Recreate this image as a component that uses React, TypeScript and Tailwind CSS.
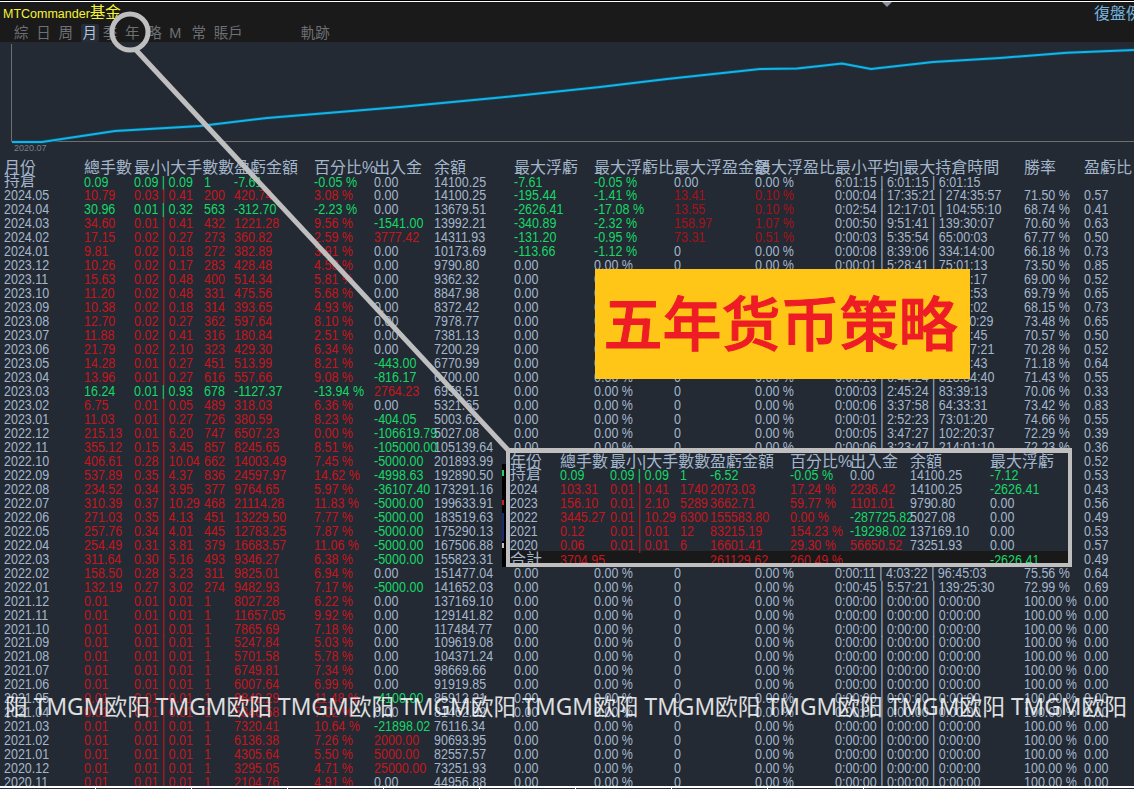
const SANS = "font-['Liberation_Sans','Noto_Sans_CJK_TC',sans-serif]";

const COLS = "grid-cols-[80px_50px_70px_30px_80px_60px_60px_80px_80px_80px_81px_80px_189px_60px_50px]";
const MINI_COLS = "grid-cols-[50px_50px_70px_30px_80px_60px_60px_80px_70px]";

const HEADERS = ["月份", "總手數", "最小|大手數數", "", "盈虧金額", "百分比%", "出入金", "余額", "最大浮虧", "最大浮虧比", "最大浮盈金額", "最大浮盈比", "最小平均|最大持倉時間", "勝率", "盈虧比"];
const YEAR_HEADERS = ["年份", "總手數", "最小|大手數數", "", "盈虧金額", "百分比%", "出入金", "余額", "最大浮虧"];

const ZERO = "0:00:00 | 0:00:00 | 0:00:00";

// month, lots, min|max, trades, profit, percent, cash flow, balance
const LEFT: string[][] = [
  ["持倉", "0.09", "0.09 | 0.09", "1", "-7.61", "-0.05 %", "0.00", "14100.25"],
  ["2024.05", "10.79", "0.03 | 0.41", "200", "420.74", "3.08 %", "0.00", "14100.25"],
  ["2024.04", "30.96", "0.01 | 0.32", "563", "-312.70", "-2.23 %", "0.00", "13679.51"],
  ["2024.03", "34.60", "0.01 | 0.41", "432", "1221.28", "9.56 %", "-1541.00", "13992.21"],
  ["2024.02", "17.15", "0.02 | 0.27", "273", "360.82", "2.59 %", "3777.42", "14311.93"],
  ["2024.01", "9.81", "0.02 | 0.18", "272", "382.89", "3.91 %", "0.00", "10173.69"],
  ["2023.12", "10.26", "0.02 | 0.17", "283", "428.48", "4.58 %", "0.00", "9790.80"],
  ["2023.11", "15.63", "0.02 | 0.48", "400", "514.34", "5.81 %", "0.00", "9362.32"],
  ["2023.10", "11.20", "0.02 | 0.48", "331", "475.56", "5.68 %", "0.00", "8847.98"],
  ["2023.09", "10.38", "0.02 | 0.18", "314", "393.65", "4.93 %", "0.00", "8372.42"],
  ["2023.08", "12.70", "0.02 | 0.27", "362", "597.64", "8.10 %", "0.00", "7978.77"],
  ["2023.07", "11.88", "0.02 | 0.41", "316", "180.84", "2.51 %", "0.00", "7381.13"],
  ["2023.06", "21.79", "0.02 | 2.10", "323", "429.30", "6.34 %", "0.00", "7200.29"],
  ["2023.05", "14.28", "0.01 | 0.27", "451", "513.99", "8.21 %", "-443.00", "6770.99"],
  ["2023.04", "13.96", "0.01 | 0.27", "616", "557.66", "9.08 %", "-816.17", "6700.00"],
  ["2023.03", "16.24", "0.01 | 0.93", "678", "-1127.37", "-13.94 %", "2764.23", "6958.51"],
  ["2023.02", "6.75", "0.01 | 0.05", "489", "318.03", "6.36 %", "0.00", "5321.65"],
  ["2023.01", "11.03", "0.01 | 0.27", "726", "380.59", "8.23 %", "-404.05", "5003.62"],
  ["2022.12", "215.13", "0.01 | 6.20", "747", "6507.23", "0.00 %", "-106619.79", "5027.08"],
  ["2022.11", "355.12", "0.15 | 3.45", "857", "8245.65", "8.51 %", "-105000.00", "105139.64"],
  ["2022.10", "406.61", "0.28 | 10.04", "662", "14003.49", "7.45 %", "-5000.00", "201893.99"],
  ["2022.09", "537.89", "0.35 | 4.37", "836", "24597.97", "14.62 %", "-4998.63", "192890.50"],
  ["2022.08", "234.52", "0.34 | 3.95", "377", "9764.65", "5.97 %", "-36107.40", "173291.16"],
  ["2022.07", "310.39", "0.37 | 10.29", "468", "21114.28", "11.83 %", "-5000.00", "199633.91"],
  ["2022.06", "271.03", "0.35 | 4.13", "451", "13229.50", "7.77 %", "-5000.00", "183519.63"],
  ["2022.05", "257.76", "0.34 | 4.01", "445", "12783.25", "7.87 %", "-5000.00", "175290.13"],
  ["2022.04", "254.49", "0.31 | 3.81", "379", "16683.57", "11.06 %", "-5000.00", "167506.88"],
  ["2022.03", "311.64", "0.30 | 5.16", "493", "9346.27", "6.38 %", "-5000.00", "155823.31"],
  ["2022.02", "158.50", "0.28 | 3.23", "311", "9825.01", "6.94 %", "0.00", "151477.04"],
  ["2022.01", "132.19", "0.27 | 3.02", "274", "9482.93", "7.17 %", "-5000.00", "141652.03"],
  ["2021.12", "0.01", "0.01 | 0.01", "1", "8027.28", "6.22 %", "0.00", "137169.10"],
  ["2021.11", "0.01", "0.01 | 0.01", "1", "11657.05", "9.92 %", "0.00", "129141.82"],
  ["2021.10", "0.01", "0.01 | 0.01", "1", "7865.69", "7.18 %", "0.00", "117484.77"],
  ["2021.09", "0.01", "0.01 | 0.01", "1", "5247.84", "5.03 %", "0.00", "109619.08"],
  ["2021.08", "0.01", "0.01 | 0.01", "1", "5701.58", "5.78 %", "0.00", "104371.24"],
  ["2021.07", "0.01", "0.01 | 0.01", "1", "6749.81", "7.34 %", "0.00", "98669.66"],
  ["2021.06", "0.01", "0.01 | 0.01", "1", "6007.64", "6.99 %", "0.00", "91919.85"],
  ["2021.05", "0.01", "0.01 | 0.01", "1", "8849.29", "11.48 %", "-4100.00", "85912.21"],
  ["2021.04", "0.01", "0.01 | 0.01", "1", "5346.58", "7.02 %", "0.00", "81462.92"],
  ["2021.03", "0.01", "0.01 | 0.01", "1", "7320.41", "10.64 %", "-21898.02", "76116.34"],
  ["2021.02", "0.01", "0.01 | 0.01", "1", "6136.38", "7.26 %", "2000.00", "90693.95"],
  ["2021.01", "0.01", "0.01 | 0.01", "1", "4305.64", "5.50 %", "5000.00", "82557.57"],
  ["2020.12", "0.01", "0.01 | 0.01", "1", "3295.05", "4.71 %", "25000.00", "73251.93"],
  ["2020.11", "0.01", "0.01 | 0.01", "1", "2104.76", "4.91 %", "0.00", "44956.88"],
];

// hold times, win rate, profit factor
const RIGHT: string[][] = [
  ["6:01:15 | 6:01:15 | 6:01:15", "", ""],
  ["0:00:04 | 17:35:21 | 274:35:57", "71.50 %", "0.57"],
  ["0:02:54 | 12:17:01 | 104:55:10", "68.74 %", "0.41"],
  ["0:00:50 | 9:51:41 | 139:30:07", "70.60 %", "0.63"],
  ["0:00:03 | 5:35:54 | 65:00:03", "67.77 %", "0.50"],
  ["0:00:08 | 8:39:06 | 334:14:00", "66.18 %", "0.73"],
  ["0:00:01 | 5:28:41 | 75:01:13", "73.50 %", "0.85"],
  ["0:00:02 | 6:12:08 | 88:47:17", "69.00 %", "0.52"],
  ["0:00:04 | 5:40:33 | 96:13:53", "69.79 %", "0.65"],
  ["0:00:01 | 4:58:19 | 72:33:02", "68.15 %", "0.73"],
  ["0:00:03 | 4:21:46 | 110:50:29", "73.48 %", "0.65"],
  ["0:00:05 | 5:02:37 | 84:59:45", "70.57 %", "0.50"],
  ["0:00:02 | 3:55:10 | 139:07:21", "70.28 %", "0.52"],
  ["0:00:06 | 4:17:52 | 91:28:43", "71.18 %", "0.64"],
  ["0:00:10 | 6:44:24 | 313:54:40", "71.43 %", "0.55"],
  ["0:00:03 | 2:45:24 | 83:39:13", "70.06 %", "0.33"],
  ["0:00:06 | 3:37:58 | 64:33:31", "73.42 %", "0.83"],
  ["0:00:01 | 2:52:23 | 73:01:20", "74.66 %", "0.55"],
  ["0:00:05 | 3:47:27 | 102:20:37", "72.29 %", "0.39"],
  ["0:00:06 | 3:23:47 | 214:01:10", "72.23 %", "0.36"],
  ["0:00:04 | 3:12:09 | 98:14:22", "71.02 %", "0.52"],
  ["0:00:02 | 3:30:41 | 120:05:36", "72.50 %", "0.53"],
  ["0:00:07 | 3:05:18 | 87:42:11", "70.88 %", "0.43"],
  ["0:00:03 | 3:41:55 | 105:19:48", "73.12 %", "0.56"],
  ["0:00:05 | 3:18:27 | 92:36:04", "71.67 %", "0.49"],
  ["0:00:01 | 3:27:33 | 116:51:20", "72.04 %", "0.53"],
  ["0:00:08 | 3:52:16 | 101:08:39", "74.21 %", "0.57"],
  ["0:00:04 | 3:36:02 | 94:27:15", "73.36 %", "0.49"],
  ["0:00:11 | 4:03:22 | 96:45:03", "75.56 %", "0.64"],
  ["0:00:45 | 5:57:21 | 139:25:30", "72.99 %", "0.69"],
];

const FLOATS: string[][] = [
  ["-7.61", "-0.05 %", "0.00", "0.00 %"],
  ["-195.44", "-1.41 %", "13.41", "0.10 %"],
  ["-2626.41", "-17.08 %", "13.55", "0.10 %"],
  ["-340.89", "-2.32 %", "158.97", "1.07 %"],
  ["-131.20", "-0.95 %", "73.31", "0.51 %"],
  ["-113.66", "-1.12 %", "0", "0.00 %"],
];

const YEARS: string[][] = [
  ["持倉", "0.09", "0.09 | 0.09", "1", "-6.52", "-0.05 %", "0.00", "14100.25", "-7.12"],
  ["2024", "103.31", "0.01 | 0.41", "1740", "2073.03", "17.24 %", "2236.42", "14100.25", "-2626.41"],
  ["2023", "156.10", "0.01 | 2.10", "5289", "3662.71", "59.77 %", "1101.01", "9790.80", "0.00"],
  ["2022", "3445.27", "0.01 | 10.29", "6300", "155583.80", "0.00 %", "-287725.82", "5027.08", "0.00"],
  ["2021", "0.12", "0.01 | 0.01", "12", "83215.19", "154.23 %", "-19298.02", "137169.10", "0.00"],
  ["2020", "0.06", "0.01 | 0.01", "6", "16601.41", "29.30 %", "56650.52", "73251.93", "0.00"],
];

const NAV = [
  { label: "綜", w: "w-[22.2px]" },
  { label: "日", w: "w-[22.2px]" },
  { label: "周", w: "w-[22.2px]" },
  { label: "月", w: "w-[22.2px]", active: true },
  { label: "季", w: "w-[22.2px]" },
  { label: "年", w: "w-[22.2px]" },
  { label: "略", w: "w-[22.2px]" },
  { label: "M", w: "w-[22.2px]" },
  { label: "常", w: "w-[22.2px]" },
  { label: "賬戶", w: "w-[87px]" },
  { label: "軌跡", w: "w-[40px]" },
];

const TICKS = [0, 1, 2, 3, 4, 5, 6, 7, 8];

const CHART_POINTS = "12,142 42,142 115,131 200,126 267,118 400,107 500,97.5 600,87 667,79 760,69 797,68.5 820,66 842,63.5 871,69 933,62 1000,58 1067,52.7 1134,50";

// the numbers in the reference are a tall narrow bitmap face, so stretch them a little
const MUTED = "scale-y-[1.15] text-[#a3b6cc]";
const RED = "scale-y-[1.15] text-[#c4161e]";
const DARK_RED = "scale-y-[1.15] text-[#a5121a]";
const GREEN = "scale-y-[1.15] text-[#17d768]";
const LABEL = "-translate-y-[1.5px] text-[16px] text-[#a3b6cc]";

function tone(value: string) {
  if (value === "0.00") return MUTED;
  return value.startsWith("-") ? GREEN : RED;
}

function Cell({ className, children }: { className?: string; children?: React.ReactNode }) {
  return <div className={`whitespace-nowrap ${className ?? ""}`}>{children}</div>;
}

function MonthRow({ left, index }: { left: string[]; index: number }) {
  const right = RIGHT[index] ?? [ZERO, "100.00 %", "0.00"];
  const floats = FLOATS[index] ?? ["0.00", "0.00 %", "0", "0.00 %"];
  const profitTone = left[4].startsWith("-") ? GREEN : RED;
  return (
    <div className={`grid h-[13.98px] items-center leading-[14px] ${COLS}`}>
      <Cell className={index === 0 ? LABEL : MUTED}>{left[0]}</Cell>
      <Cell className={profitTone}>{left[1]}</Cell>
      <Cell className={profitTone}>{left[2]}</Cell>
      <Cell className={profitTone}>{left[3]}</Cell>
      <Cell className={profitTone}>{left[4]}</Cell>
      <Cell className={profitTone}>{left[5]}</Cell>
      <Cell className={tone(left[6])}>{left[6]}</Cell>
      <Cell className={MUTED}>{left[7]}</Cell>
      <Cell className={floats[0].startsWith("-") ? GREEN : MUTED}>{floats[0]}</Cell>
      <Cell className={floats[1].startsWith("-") ? GREEN : MUTED}>{floats[1]}</Cell>
      <Cell className={floats[2] === "0" || index === 0 ? MUTED : DARK_RED}>{floats[2]}</Cell>
      <Cell className={floats[3] === "0.00 %" ? MUTED : DARK_RED}>{floats[3]}</Cell>
      <Cell className={MUTED}>{right[0]}</Cell>
      <Cell className={MUTED}>{right[1]}</Cell>
      <Cell className={MUTED}>{right[2]}</Cell>
    </div>
  );
}

function YearPanel() {
  return (
    <div className="absolute left-[506px] top-[448px] h-[119px] w-[566px]">
      <div className="absolute -left-1 top-[16px] h-[103px] w-1 bg-black">
        <div className="mt-[6px] h-[6px] w-[2px] bg-[#1fd35f]" />
        <div className="mt-[24px] h-[5px] w-[2px] bg-[#c4202a]" />
        <div className="mt-[8px] h-[28px] w-[2px] bg-[#1c2a6e]" />
        <div className="mt-[2px] h-[5px] w-[2px] bg-[#c9c2a5]" />
      </div>
      <div className="flex h-full flex-col overflow-hidden border-x-[4px] border-b-[4px] border-t-[5px] border-[#bfbfbf] bg-[#232a33] pt-[2px]">
        <div className={`grid h-[13px] shrink-0 items-center text-[16px] leading-[14px] text-[#a3b6cc] ${MINI_COLS}`}>
          {YEAR_HEADERS.map((h, i) => (
            <Cell key={i}>{h}</Cell>
          ))}
        </div>
        {YEARS.map((row, i) => {
          const t = i === 0 ? GREEN : RED;
          return (
            <div key={row[0]} className={`grid h-[14px] shrink-0 items-center leading-[14px] ${MINI_COLS}`}>
              <Cell className={i === 0 ? LABEL : MUTED}>{row[0]}</Cell>
              <Cell className={t}>{row[1]}</Cell>
              <Cell className={t}>{row[2]}</Cell>
              <Cell className={t}>{row[3]}</Cell>
              <Cell className={row[4].startsWith("-") ? GREEN : RED}>{row[4]}</Cell>
              <Cell className={t}>{row[5]}</Cell>
              <Cell className={tone(row[6])}>{row[6]}</Cell>
              <Cell className={MUTED}>{row[7]}</Cell>
              <Cell className={tone(row[8])}>{row[8]}</Cell>
            </div>
          );
        })}
        <div className={`-mt-px grid h-[16px] shrink-0 bg-[#191919] pt-[2px] leading-[14px] ${MINI_COLS}`}>
          <Cell className="text-[16px] text-[#a3b6cc]">合計</Cell>
          <Cell className={RED}>3704.95</Cell>
          <Cell />
          <Cell />
          <Cell className={RED}>261129.62</Cell>
          <Cell className={RED}>260.49 %</Cell>
          <Cell />
          <Cell />
          <Cell className={GREEN}>-2626.41</Cell>
        </div>
      </div>
    </div>
  );
}

export default function App() {
  return (
    <div className={`relative h-[789px] w-[1134px] overflow-hidden bg-[#232a33] text-[12.5px] ${SANS}`}>
      {/* top bar */}
      <div className="h-[42px] bg-[#1a1a1a]">
        <div className="h-px bg-black" />
        <div className="h-[1px] bg-white" />
        <div className="relative flex h-[21px] items-center justify-between pl-[3px] pt-[2px]">
          <span className="text-[12.5px] leading-[19px] text-[#f6f337]">
            MTCommander<span className="text-[15.5px]">基金</span>
          </span>
          <div className="absolute left-[882px] top-0 h-0 w-0 border-x-[5px] border-t-[5px] border-x-transparent border-t-[#8a929c]" />
          <span className="w-[40px] overflow-hidden whitespace-nowrap text-[16px] leading-[19px] text-[#76b1dc]">復盤例</span>
        </div>
        <div className="flex h-[19px] items-center pl-[14px] pt-[1px] text-[14.5px] leading-[18px] text-[#6d7074]">
          {NAV.map((tab) => (
            <div key={tab.label} className={tab.w}>
              <span className={tab.active ? "rounded-[2px] bg-[#262d36] px-[2px] py-px text-[#b4c6dc]" : ""}>{tab.label}</span>
            </div>
          ))}
        </div>
      </div>

      {/* equity chart */}
      <div className="relative h-[112px]">
        <svg className="absolute inset-0" width="1134" height="112" viewBox="0 42 1134 112">
          <path d="M11.5 44V141.5H1134" fill="none" stroke="#6e6e6e" strokeWidth="1" />
          <polyline points={CHART_POINTS} fill="none" stroke="#0d4a63" strokeWidth="3.5" />
          <polyline points={CHART_POINTS} fill="none" stroke="#17b2e6" strokeWidth="2" />
        </svg>
        <span className="absolute left-[14px] top-[100px] text-[9px] leading-[12px] text-[#7c8087]">2020.07</span>
      </div>

      {/* monthly table */}
      <div className="pl-1">
        <div className={`grid h-[18px] items-center pt-[7px] text-[16px] leading-[14px] text-[#a3b6cc] ${COLS}`}>
          {HEADERS.map((h, i) => (
            <Cell key={i}>{h}</Cell>
          ))}
        </div>
        <div className="pt-[2.5px]">
          {LEFT.map((row, i) => (
            <MonthRow key={row[0]} left={row} index={i} />
          ))}
        </div>
      </div>

      {/* bottom window edge */}
      <div className="absolute inset-x-0 bottom-0 flex h-[3px] border-t-2 border-white bg-[#232a33]">
        {TICKS.map((t) => (
          <div key={t} className="w-[96px] border-r border-white" />
        ))}
      </div>

      {/* annotation overlays */}
      <div className="absolute left-[595px] top-[269px] flex h-[110px] w-[375px] items-center justify-center bg-[#ffc618] pb-[8px] pr-[4px] text-[59px] font-medium leading-none text-[#ee1c25] [-webkit-text-stroke:1px_#ee1c25] font-['Noto_Sans_CJK_SC',sans-serif]">
        五年货币策略
      </div>
      <YearPanel />
      <svg className="pointer-events-none absolute inset-0" width="1134" height="789">
        <circle cx="130" cy="32" r="18" fill="none" stroke="#bfbfbf" strokeWidth="5" />
        <line x1="136" y1="50" x2="509" y2="451" stroke="#bfbfbf" strokeWidth="5" />
      </svg>

      {/* watermark */}
      <div className="pointer-events-none absolute left-[5px] top-[692px] whitespace-nowrap text-[22.8px] leading-[30px] text-white/85 font-['Noto_Sans','Noto_Sans_CJK_SC',sans-serif]">
        阳 TMGM欧阳 TMGM欧阳 TMGM欧阳 TMGM欧阳 TMGM欧阳 TMGM欧阳 TMGM欧阳 TMGM欧阳 TMGM欧阳
      </div>
    </div>
  );
}
